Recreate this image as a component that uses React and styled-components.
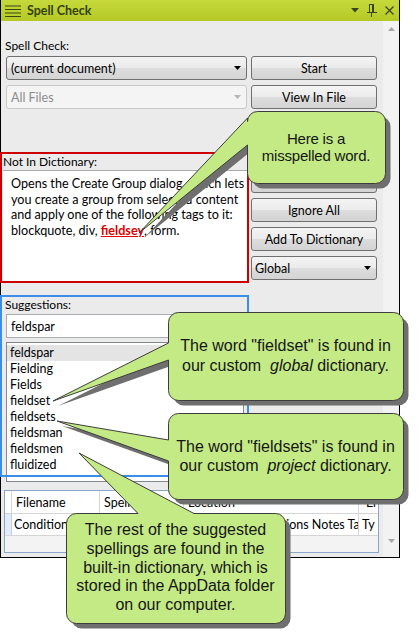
import React from 'react';
import styled, { createGlobalStyle } from 'styled-components';

const UI = `Lato, "Noto Sans", sans-serif`;
const CALLOUT_FONT = `"Liberation Sans", Arial, sans-serif`;

const Global = createGlobalStyle`
  html, body { margin: 0; padding: 0; background: #fff; }
  body { font-family: ${UI}; }
  * { box-sizing: border-box; }
`;

const Page = styled.div`
  position: relative;
  width: 418px;
  height: 638px;
  overflow: hidden;
  background: #fff;
`;

const Window = styled.div`
  width: 400px;
  height: 558px;
  border: 1px solid #000;
  border-top: none;
  display: flex;
  flex-direction: column;
  background: #ebebeb;
`;

const TitleBar = styled.div`
  height: 21px;
  flex: none;
  display: flex;
  align-items: center;
  gap: 5px;
  padding: 0 5px 0 3px;
  background: linear-gradient(#c6d93b, #b4c926);
  color: #3a4710;
`;

const TitleText = styled.div`
  flex: 1;
  font: bold 12.5px ${UI};
  color: #34420c;
`;

const TitleIcons = styled.div`
  display: flex;
  align-items: center;
  gap: 8px;
`;

const Body = styled.div`
  flex: 1;
  display: flex;
  min-height: 0;
`;

const Content = styled.div`
  width: 382px;
  flex: none;
  display: flex;
  flex-direction: column;
  padding-top: 17px;
`;

const Scrollbar = styled.div`
  width: 16px;
  flex: none;
  background: #f2f2f2;
  display: flex;
  flex-direction: column;
  justify-content: space-between;
  align-items: center;
  padding: 6px 0 14px;
`;

const Label = styled.div`
  font: 12px ${UI};
  line-height: 16px;
  height: 16px;
  color: #000;
  padding-left: ${p => p.$indent ?? 4}px;
  white-space: nowrap;
`;

const Row = styled.div`
  display: flex;
  gap: 4px;
  height: 24px;
  margin-top: ${p => p.$mt}px;
`;

const Combo = styled.div`
  width: 241px;
  height: 24px;
  margin-left: 5px;
  border: 1px solid ${p => (p.$disabled ? '#c9c9c9' : '#707070')};
  border-radius: 3px;
  background: ${p =>
    p.$disabled ? '#f4f4f4' : 'linear-gradient(#f3f3f3, #ebebeb 50%, #dddddd 51%, #d4d4d4)'};
  display: flex;
  align-items: center;
  justify-content: space-between;
  padding: 0 5px 0 4px;
  font: 12.5px ${UI};
  color: ${p => (p.$disabled ? '#8c8c8c' : '#000')};
`;

const Button = styled.div`
  width: ${p => p.$w ?? 126}px;
  height: 24px;
  flex: none;
  border: 1px solid #707070;
  border-radius: 3px;
  background: linear-gradient(#f4f4f4, #ebebeb 50%, #dddddd 51%, #d3d3d3);
  display: flex;
  align-items: center;
  justify-content: ${p => (p.$combo ? 'space-between' : 'center')};
  padding: ${p => (p.$combo ? '0 5px 0 3px' : '0')};
  font: 12.5px ${UI};
  color: #000;
  white-space: nowrap;
`;

const MidRow = styled.div`
  display: flex;
  margin-top: 31px;
`;

const LeftCol = styled.div`
  width: 249px;
  margin-left: -1px;
  padding-top: 12px;
  display: flex;
  flex-direction: column;
  gap: 12px;
`;

const RightCol = styled.div`
  margin-left: 2px;
  display: flex;
  flex-direction: column;
  gap: 5px;
`;

const Panel = styled.div`
  position: relative;
  height: ${p => p.$h}px;
  padding: 2px;
  display: flex;
  flex-direction: column;
  &::after {
    content: '';
    position: absolute;
    inset: 0;
    border: 2px solid ${p => p.$color};
    pointer-events: none;
    z-index: 2;
  }
`;

const TextBox = styled.div`
  margin-left: 1px;
  height: 112px;
  flex: none;
  background: #fff;
  border-top: 1px solid #a9a9a9;
  padding: 5px 0 0 8px;
  font: 12.6px ${UI};
  line-height: 15.6px;
  color: #000;
  white-space: nowrap;
`;

const Misspelled = styled.span`
  color: #e00000;
  font-weight: bold;
  text-decoration: underline;
`;

const Input = styled.div`
  margin: 1px 0 0 4px;
  width: 238px;
  height: 24px;
  flex: none;
  background: #fff;
  border: 1px solid #abadb3;
  display: flex;
  align-items: center;
  padding-left: 4px;
  font: 12.5px ${UI};
  color: #000;
`;

const List = styled.div`
  margin: 4px 0 0 4px;
  width: 238px;
  height: 140px;
  flex: none;
  background: #fff;
  border: 1px solid #828790;
  padding-top: 2px;
  position: relative;
  z-index: 1;
`;

const Item = styled.div`
  height: 16px;
  padding-left: 3px;
  font: 12.5px ${UI};
  line-height: 16px;
  color: #000;
  background: ${p => (p.$selected ? '#e4e4e4' : 'transparent')};
`;

const Table = styled.div`
  margin: 13px 0 0 3px;
  width: 375px;
  height: 63px;
  border: 1px solid #8ba5c9;
  background: #f3f3f3;
  display: flex;
  flex-direction: column;
`;

const TRow = styled.div`
  display: grid;
  grid-template-columns: 7px 88px 84px 175px 19px;
  height: ${p => p.$h}px;
  background: #fff;
  border-bottom: 1px solid #d5d5d5;
`;

const Cell = styled.div`
  border-right: ${p => (p.$last ? 'none' : '1px solid #d5d5d5')};
  padding-left: ${p => p.$pl ?? 4}px;
  display: flex;
  align-items: center;
  font: 12.5px ${UI};
  color: #000;
  white-space: nowrap;
  overflow: hidden;
  background: ${p => (p.$rowHead ? '#e2edf9' : 'transparent')};
  ${p => p.$rowHead && 'border-right: 1px solid #b9d0ea;'}
`;

const ShapeLayer = styled.svg`
  position: absolute;
  left: 0;
  top: 0;
  pointer-events: none;
  overflow: visible;
  z-index: 10;
`;

const CalloutText = styled.div`
  position: absolute;
  z-index: 11;
  left: ${p => p.$x}px;
  top: ${p => p.$y}px;
  width: ${p => p.$w}px;
  height: ${p => p.$h}px;
  display: flex;
  flex-direction: column;
  align-items: center;
  justify-content: center;
  text-align: center;
  font-family: ${CALLOUT_FONT};
  font-size: ${p => p.$size}px;
  line-height: ${p => p.$lh}px;
  letter-spacing: ${p => p.$ls ?? 0}px;
  color: #161616;
  white-space: nowrap;
`;

function calloutPath({ x, y, w, h }, side, base, tip, r = 10) {
  x += 0.5; y += 0.5;
  const R = x + w, B = y + h;
  let d = `M${x + r},${y}`;
  if (side === 'top') d += ` H${base[0]} L${tip[0]},${tip[1]} L${base[1]},${y}`;
  d += ` H${R - r} A${r},${r} 0 0 1 ${R},${y + r} V${B - r} A${r},${r} 0 0 1 ${R - r},${B} H${x + r} A${r},${r} 0 0 1 ${x},${B - r}`;
  if (side === 'left') d += ` V${base[1]} L${tip[0]},${tip[1]} L${x},${base[0]}`;
  d += ` V${y + r} A${r},${r} 0 0 1 ${x + r},${y} Z`;
  return d;
}

function Callout({ box, side, base, tip, size, lh, ls, children }) {
  const d = calloutPath(box, side, base, tip);
  return (
    <>
      <ShapeLayer width="418" height="638" viewBox="0 0 418 638">
        <path d={d} transform="translate(5,5)" fill="#6f6f6f" />
        <path d={d} fill="#c4ea86" stroke="#3c3c3c" strokeWidth="1" />
      </ShapeLayer>
      <CalloutText $x={box.x} $y={box.y} $w={box.w} $h={box.h} $size={size} $lh={lh} $ls={ls}>
        {children}
      </CalloutText>
    </>
  );
}

const Arrow = ({ color = '#000' }) => (
  <svg width="7" height="4" viewBox="0 0 7 4">
    <polygon points="0,0 7,0 3.5,4" fill={color} />
  </svg>
);

const ScrollArrow = ({ up }) => (
  <svg width="7" height="4" viewBox="0 0 7 4">
    <polygon points={up ? '0,4 7,4 3.5,0' : '0,0 7,0 3.5,4'} fill="#a6a6a6" />
  </svg>
);

const MenuIcon = () => (
  <svg width="18" height="14" viewBox="0 0 18 14">
    {[1.5, 5, 8.5, 12].map(y => (
      <rect key={y} x="1" y={y} width="16" height="1" fill="#3a4710" />
    ))}
  </svg>
);

const DropIcon = () => (
  <svg width="8" height="5" viewBox="0 0 8 5">
    <polygon points="0,0 8,0 4,4.5" fill="#3a4710" />
  </svg>
);

const PinIcon = () => (
  <svg width="10" height="13" viewBox="0 0 10 13">
    <rect x="2.5" y="0.5" width="4" height="8" fill="none" stroke="#3a4710" />
    <rect x="5" y="0.5" width="1.5" height="8" fill="#3a4710" />
    <rect x="0" y="8" width="10" height="1" fill="#3a4710" />
    <rect x="4" y="9" width="1" height="4" fill="#3a4710" />
  </svg>
);

const CloseIcon = () => (
  <svg width="9" height="9" viewBox="0 0 9 9">
    <path d="M0.5 0.5 L8.5 8.5 M8.5 0.5 L0.5 8.5" stroke="#3a4710" strokeWidth="1.2" />
  </svg>
);

const suggestions = ['feldspar', 'Fielding', 'Fields', 'fieldset', 'fieldsets', 'fieldsman', 'fieldsmen', 'fluidized'];

export default function App() {
  return (
    <Page>
      <Global />
      <Window>
        <TitleBar>
          <MenuIcon />
          <TitleText>Spell Check</TitleText>
          <TitleIcons>
            <DropIcon />
            <PinIcon />
            <CloseIcon />
          </TitleIcons>
        </TitleBar>
        <Body>
          <Content>
            <Label>Spell Check:</Label>
            <Row $mt={2}>
              <Combo>
                <span>(current document)</span>
                <Arrow />
              </Combo>
              <Button>Start</Button>
            </Row>
            <Row $mt={5}>
              <Combo $disabled>
                <span>All Files</span>
                <Arrow color="#b5b5b5" />
              </Combo>
              <Button>View In File</Button>
            </Row>
            <MidRow>
              <LeftCol>
                <Panel $h={131} $color="#cc0000">
                  <Label $indent={1}>Not In Dictionary:</Label>
                  <TextBox>
                    Opens the Create Group dialog, which lets<br />
                    you create a group from selected content<br />
                    and apply one of the following tags to it:<br />
                    blockquote, div, <Misspelled>fieldsey</Misspelled>, form.
                  </TextBox>
                </Panel>
                <Panel $h={182} $color="#3a8ee8">
                  <Label $indent={3}>Suggestions:</Label>
                  <Input>feldspar</Input>
                  <List>
                    {suggestions.map((s, i) => (
                      <Item key={s} $selected={i === 0}>{s}</Item>
                    ))}
                  </List>
                </Panel>
              </LeftCol>
              <RightCol>
                <Button>Change</Button>
                <Button>Ignore</Button>
                <Button>Ignore All</Button>
                <Button>Add To Dictionary</Button>
                <Button $combo>
                  <span>Global</span>
                  <Arrow />
                </Button>
              </RightCol>
            </MidRow>
            <Table>
              <TRow $h={23}>
                <Cell $pl={0} />
                <Cell>Filename</Cell>
                <Cell>Spelling</Cell>
                <Cell>Location</Cell>
                <Cell $last $pl={7}>Er</Cell>
              </TRow>
              <TRow $h={22}>
                <Cell $pl={0} $rowHead />
                <Cell $pl={2}>Conditions Notes Table.htm</Cell>
                <Cell>fieldsey</Cell>
                <Cell>Resources/Conditions Notes Table</Cell>
                <Cell $last $pl={3}>Ty</Cell>
              </TRow>
            </Table>
          </Content>
          <Scrollbar>
            <ScrollArrow up />
            <ScrollArrow />
          </Scrollbar>
        </Body>
      </Window>

      <Callout box={{ x: 247, y: 111, w: 138, h: 72 }} side="left" base={[118, 145]} tip={[139, 233]} size={15} lh={17} ls={-0.2}>
        <div>Here is a</div>
        <div>misspelled word.</div>
      </Callout>
      <Callout box={{ x: 168, y: 312, w: 235, h: 88 }} side="left" base={[343, 360]} tip={[53, 401]} size={16} lh={20}>
        <div>The word "fieldset" is found in</div>
        <div>our custom&nbsp; <i>global</i> dictionary.</div>
      </Callout>
      <Callout box={{ x: 168, y: 413, w: 235, h: 86 }} side="left" base={[440, 461]} tip={[57, 421]} size={16} lh={19}>
        <div>The word "fieldsets" is found in</div>
        <div>our custom&nbsp; <i>project</i> dictionary.</div>
      </Callout>
      <Callout box={{ x: 66, y: 513, w: 219, h: 110 }} side="top" base={[138, 194]} tip={[79, 453]} size={16} lh={18.7}>
        <div>The rest of the suggested</div>
        <div>spellings are found in the</div>
        <div>built-in dictionary, which is</div>
        <div>stored in the AppData folder</div>
        <div>on our computer.</div>
      </Callout>
    </Page>
  );
}
